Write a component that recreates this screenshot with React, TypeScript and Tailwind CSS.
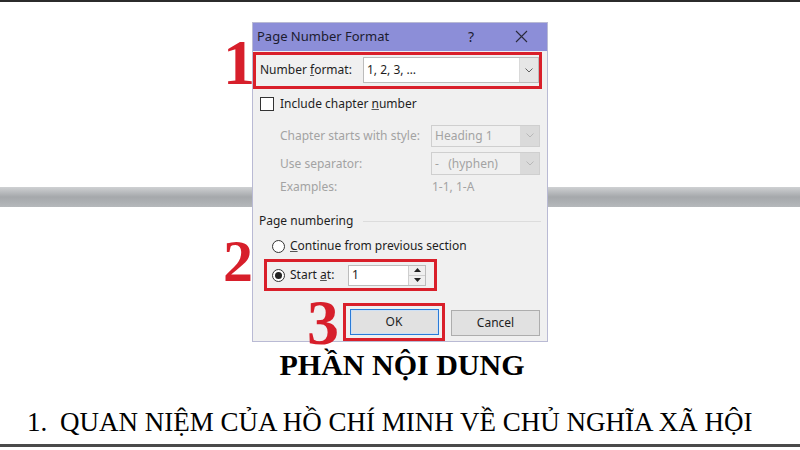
import React from 'react';

const ui = { fontFamily: '"Noto Sans", "Open Sans", sans-serif' };
const serif = { fontFamily: '"Liberation Serif", "Times New Roman", serif' };

function Chevron({ color = '#606060' }: { color?: string }) {
  return (
    <svg width="8" height="5" viewBox="0 0 8 5">
      <path d="M0.5 0.5 L4 4 L7.5 0.5" fill="none" stroke={color} strokeWidth="1" />
    </svg>
  );
}

function Combo({ value, disabled, width }: { value: string; disabled?: boolean; width: string }) {
  return (
    <div
      className={`flex h-full items-stretch border ${width} ${
        disabled ? 'border-[#cfcfcf] bg-[#f0f0f0] text-[#a3a3a3]' : 'border-[#bcbcbc] bg-white text-[#1e1e1e]'
      }`}
    >
      <span className="flex flex-1 items-center whitespace-pre pl-[3px]">{value}</span>
      <span
        className={`flex w-[19px] items-center justify-center ${disabled ? 'bg-[#dadada]' : 'bg-[#e6e6e6] border-l border-[#d9d9d9]'}`}
      >
        <Chevron color={disabled ? '#b8b8b8' : '#606060'} />
      </span>
    </div>
  );
}

function Radio({ checked }: { checked?: boolean }) {
  return (
    <span className="flex h-[13px] w-[13px] items-center justify-center rounded-full border border-[#333] bg-white">
      {checked && <span className="h-[7px] w-[7px] rounded-full bg-[#222]" />}
    </span>
  );
}

function Dialog() {
  return (
    <div
      className="absolute left-[252px] top-[22px] flex h-[320px] w-[296px] flex-col border border-[#b9bad4] bg-[#f0f0f0] text-[12px] text-[#1e1e1e]"
      style={ui}
    >
      {/* title bar */}
      <div className="flex h-[28px] items-center bg-[#8c8ed8] pl-[4px] text-[13px] text-[#1c1c30]">
        <span className="flex-1">Page Number Format</span>
        <span className="w-[20px] text-center text-[14px]">?</span>
        <span className="ml-[32px] mr-[18px] flex w-[16px] justify-center">
          <svg width="13" height="13" viewBox="0 0 13 13">
            <path d="M1 1 L12 12 M12 1 L1 12" stroke="#2a2a3a" strokeWidth="1.1" />
          </svg>
        </span>
      </div>

      {/* 1: number format */}
      <div className="mt-[1px] flex h-[37px] w-[289px] items-center border-[3px] border-[#d91f2a] pl-[4px]">
        <span className="w-[103px]">
          Number <span className="underline decoration-[#555]">f</span>ormat:
        </span>
        <div className="h-[26px]">
          <Combo value="1, 2, 3, …" width="w-[176px]" />
        </div>
      </div>

      {/* chapter */}
      <div className="mt-[7px] flex h-[16px] items-center pl-[7px]">
        <span className="h-[14px] w-[14px] border border-[#333] bg-white" />
        <span className="ml-[6px]">
          Include chapter <span className="underline decoration-[#555]">n</span>umber
        </span>
      </div>
      <div className="mt-[13px] flex h-[23px] items-center pl-[27px] text-[#a3a3a3]">
        <span className="w-[151px]">Chapter starts with style:</span>
        <Combo value="Heading 1" disabled width="w-[109px]" />
      </div>
      <div className="mt-[5px] flex h-[23px] items-center pl-[27px] text-[#a3a3a3]">
        <span className="w-[151px]">Use separator:</span>
        <Combo value="-   (hyphen)" disabled width="w-[109px]" />
      </div>
      <div className="mt-[3px] flex h-[18px] items-center pl-[27px] text-[#a3a3a3]">
        <span className="w-[152px]">Examples:</span>
        <span>1-1, 1-A</span>
      </div>

      {/* page numbering */}
      <div className="mt-[17px] flex h-[16px] items-center pl-[6px] pr-[6px]">
        <span>Page numbering</span>
        <span className="ml-[10px] h-px flex-1 bg-[#dcdcdc]" />
      </div>
      <div className="mt-[9px] flex h-[16px] items-center pl-[19px]">
        <Radio />
        <span className="ml-[5px]">
          <span className="underline decoration-[#555]">C</span>ontinue from previous section
        </span>
      </div>
      <div className="ml-[11px] mt-[5px] flex h-[32px] w-[173px] items-center border-[3px] border-[#d91f2a] pl-[5px]">
        <Radio checked />
        <span className="ml-[5px] w-[58px]">
          Start <span className="underline decoration-[#555]">a</span>t:
        </span>
        <div className="flex h-[21px] w-[78px] border border-[#bcbcbc] bg-white">
          <span className="flex flex-1 items-center pl-[3px]">1</span>
          <span className="flex w-[17px] flex-col border-l border-[#cfcfcf] bg-[#efefef]">
            <span className="flex flex-1 items-center justify-center border-b border-[#cfcfcf]">
              <svg width="7" height="4" viewBox="0 0 7 4">
                <path d="M0 4 L3.5 0 L7 4 Z" fill="#222" />
              </svg>
            </span>
            <span className="flex flex-1 items-center justify-center">
              <svg width="7" height="4" viewBox="0 0 7 4">
                <path d="M0 0 L3.5 4 L7 0 Z" fill="#222" />
              </svg>
            </span>
          </span>
        </div>
      </div>

      {/* buttons */}
      <div className="mt-[12px] flex items-start">
        <div className="ml-[90px] flex h-[38px] w-[102px] items-center justify-center border-[3px] border-[#d91f2a]">
          <button className="flex h-[26px] w-[89px] items-center justify-center border border-[#2a7ad6] bg-[#e1e1e1] text-[12px] text-[#1e1e1e] shadow-[inset_0_0_0_1px_#cde0f5]">
            OK
          </button>
        </div>
        <button className="ml-[6px] mt-[7px] flex h-[26px] w-[89px] items-center justify-center border border-[#adadad] bg-[#e1e1e1] text-[12px] text-[#1e1e1e]">
          Cancel
        </button>
      </div>
    </div>
  );
}

export default function App() {
  return (
    <div className="relative h-[450px] w-[800px] overflow-hidden bg-white">
      <div className="flex h-full flex-col">
        <div className="h-[2px] bg-[#2b2b2b]" />
        <div className="h-[185px]" />
        <div className="h-[20px] bg-gradient-to-b from-[#cfd1d3] via-[#a5a8ab] to-[#b5b8bb]" />
        <div className="h-[141px]" />
        <div className="text-center text-[30px] font-bold leading-[34px] text-black" style={serif}>
          <span className="ml-[4px]">PHẦN NỘI DUNG</span>
        </div>
        <div className="mt-[25px] flex text-[27px] leading-[30px] text-black" style={serif}>
          <span className="ml-[27px] w-[33px]">1.</span>
          <span>QUAN NIỆM CỦA HỒ CHÍ MINH VỀ CHỦ NGHĨA XÃ HỘI</span>
        </div>
        <div className="flex-1" />
        <div className="mb-[3px] h-[3px] bg-[#4a4a4a]" />
      </div>

      <Dialog />

      <span className="absolute left-[223px] top-[40px] text-[64px] font-bold leading-[46px] text-[#d71f2b]" style={serif}>
        1
      </span>
      <span className="absolute left-[223px] top-[239px] text-[60px] font-bold leading-[44px] text-[#d71f2b]" style={serif}>
        2
      </span>
      <span className="absolute left-[307px] top-[300px] text-[64px] font-bold leading-[46px] text-[#d71f2b]" style={serif}>
        3
      </span>
    </div>
  );
}
